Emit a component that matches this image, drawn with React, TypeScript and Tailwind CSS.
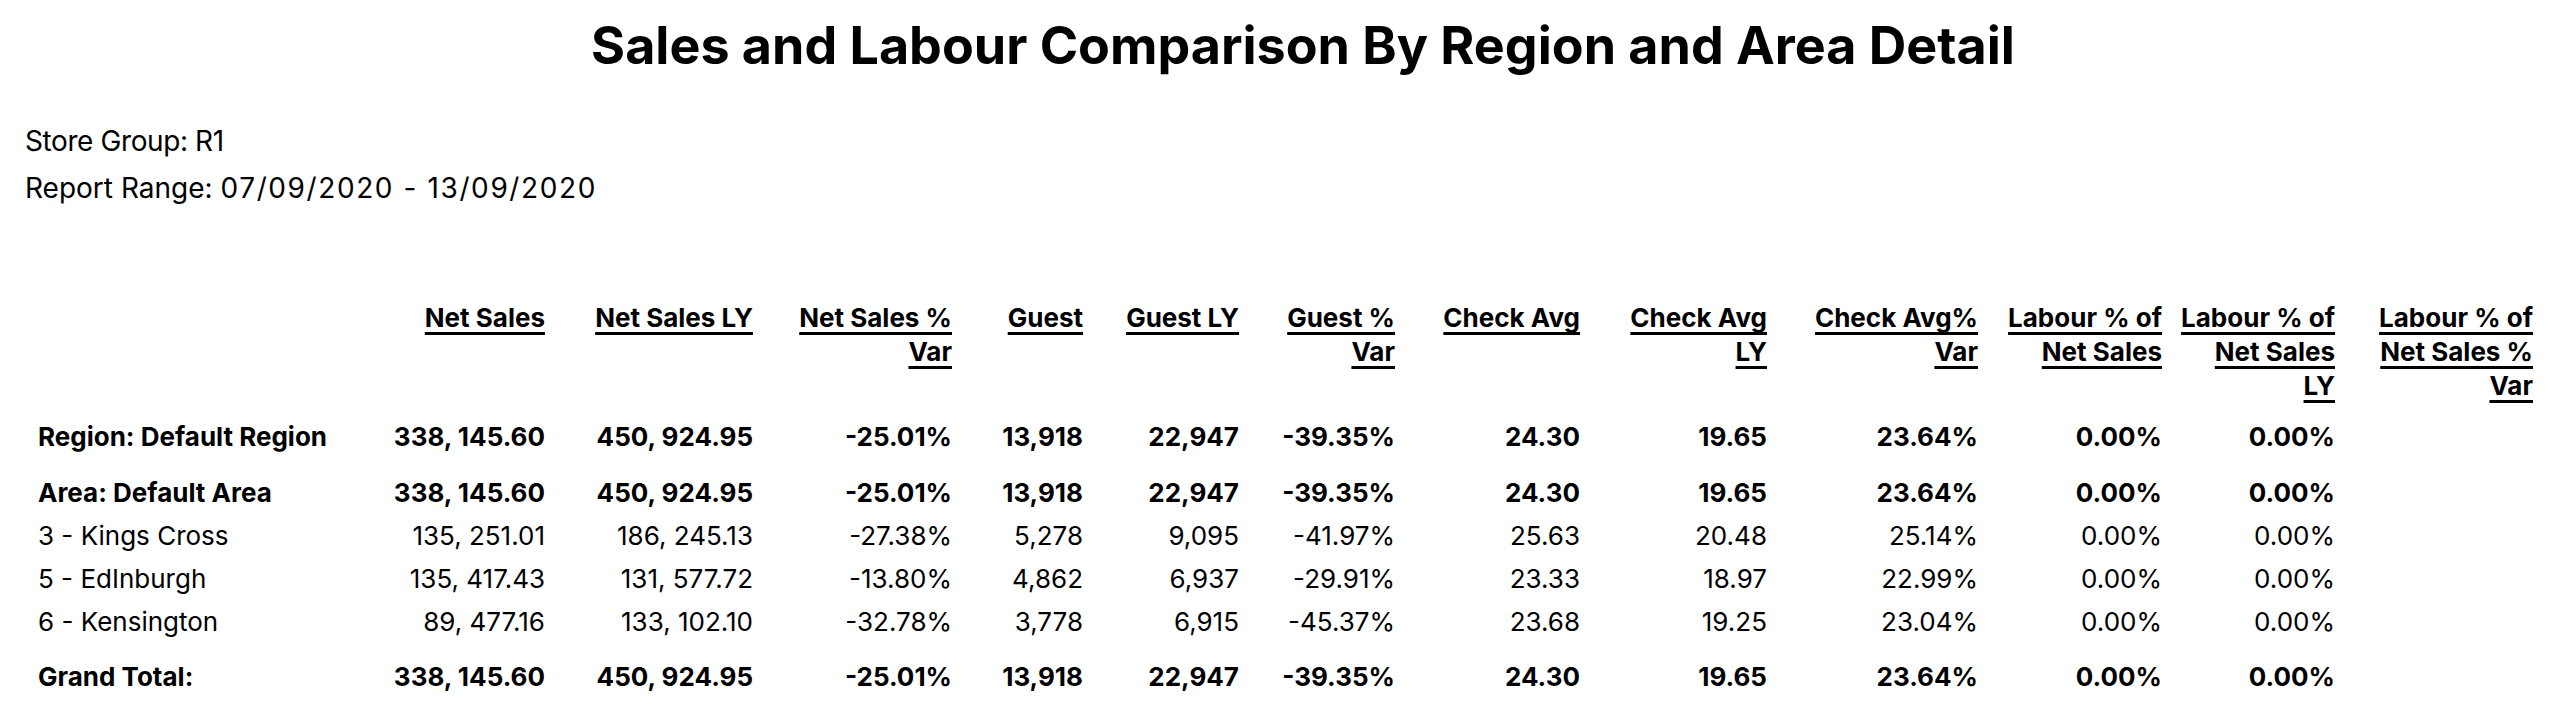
import React from "react";

type Row = {
  label: string;
  kind: "group" | "area" | "detail" | "total";
  values: string[];
};

const headers: string[][] = [
  ["Net Sales"],
  ["Net Sales LY"],
  ["Net Sales %", "Var"],
  ["Guest"],
  ["Guest LY"],
  ["Guest %", "Var"],
  ["Check Avg"],
  ["Check Avg", "LY"],
  ["Check Avg%", "Var"],
  ["Labour % of", "Net Sales"],
  ["Labour % of", "Net Sales", "LY"],
  ["Labour % of", "Net Sales %", "Var"],
];

const rows: Row[] = [
  {
    label: "Region: Default Region",
    kind: "group",
    values: ["338, 145.60", "450, 924.95", "-25.01%", "13,918", "22,947", "-39.35%", "24.30", "19.65", "23.64%", "0.00%", "0.00%", ""],
  },
  {
    label: "Area: Default Area",
    kind: "area",
    values: ["338, 145.60", "450, 924.95", "-25.01%", "13,918", "22,947", "-39.35%", "24.30", "19.65", "23.64%", "0.00%", "0.00%", ""],
  },
  {
    label: "3 - Kings Cross",
    kind: "detail",
    values: ["135, 251.01", "186, 245.13", "-27.38%", "5,278", "9,095", "-41.97%", "25.63", "20.48", "25.14%", "0.00%", "0.00%", ""],
  },
  {
    label: "5 - EdInburgh",
    kind: "detail",
    values: ["135, 417.43", "131, 577.72", "-13.80%", "4,862", "6,937", "-29.91%", "23.33", "18.97", "22.99%", "0.00%", "0.00%", ""],
  },
  {
    label: "6 - Kensington",
    kind: "detail",
    values: ["89, 477.16", "133, 102.10", "-32.78%", "3,778", "6,915", "-45.37%", "23.68", "19.25", "23.04%", "0.00%", "0.00%", ""],
  },
  {
    label: "Grand Total:",
    kind: "total",
    values: ["338, 145.60", "450, 924.95", "-25.01%", "13,918", "22,947", "-39.35%", "24.30", "19.65", "23.64%", "0.00%", "0.00%", ""],
  },
];

const padFor: Record<Row["kind"], string> = {
  group: "pt-[17px]",
  area: "pt-[22px]",
  detail: "pt-[9px]",
  total: "pt-[21px]",
};

export default function App() {
  return (
    <div className="w-[2560px] h-[715px] overflow-hidden bg-white text-black font-['Inter','Noto_Sans',sans-serif]">
      <h1 className="pt-[14px] pl-[46px] text-center text-[52px] font-bold leading-[64px]">
        Sales and Labour Comparison By Region and Area Detail
      </h1>

      <div className="mt-[40px] pl-[25px] text-[28px] leading-[47px]">
        <div className="tracking-[-0.4px]">Store Group: R1</div>
        <div>
          Report Range: <span className="tracking-[1.6px]">07/09/2020 - 13/09/2020</span>
        </div>
      </div>

      <table className="mt-[89px] ml-[38px] table-fixed border-collapse text-[26px] leading-[34px]">
        <colgroup>
          <col className="w-[342px]" />
          <col className="w-[165px]" />
          <col className="w-[208px]" />
          <col className="w-[199px]" />
          <col className="w-[131px]" />
          <col className="w-[156px]" />
          <col className="w-[156px]" />
          <col className="w-[185px]" />
          <col className="w-[187px]" />
          <col className="w-[211px]" />
          <col className="w-[184px]" />
          <col className="w-[173px]" />
          <col className="w-[198px]" />
        </colgroup>
        <thead>
          <tr>
            <th className="p-0"></th>
            {headers.map((lines, i) => (
              <th key={i} className="p-0 text-right align-top font-bold whitespace-nowrap">
                {lines.map((l, j) => (
                  <div key={j}>
                    <span className="underline decoration-[3px] underline-offset-[5px] [text-decoration-skip-ink:none]">
                      {l}
                    </span>
                  </div>
                ))}
              </th>
            ))}
          </tr>
        </thead>
        <tbody>
          {rows.map((r, i) => {
            const bold = r.kind !== "detail";
            return (
              <tr key={i} className={bold ? "font-bold" : "font-normal"}>
                <td className={`p-0 ${padFor[r.kind]} text-left whitespace-nowrap`}>{r.label}</td>
                {r.values.map((v, j) => (
                  <td key={j} className={`p-0 ${padFor[r.kind]} text-right whitespace-nowrap`}>
                    {v}
                  </td>
                ))}
              </tr>
            );
          })}
        </tbody>
      </table>
    </div>
  );
}
